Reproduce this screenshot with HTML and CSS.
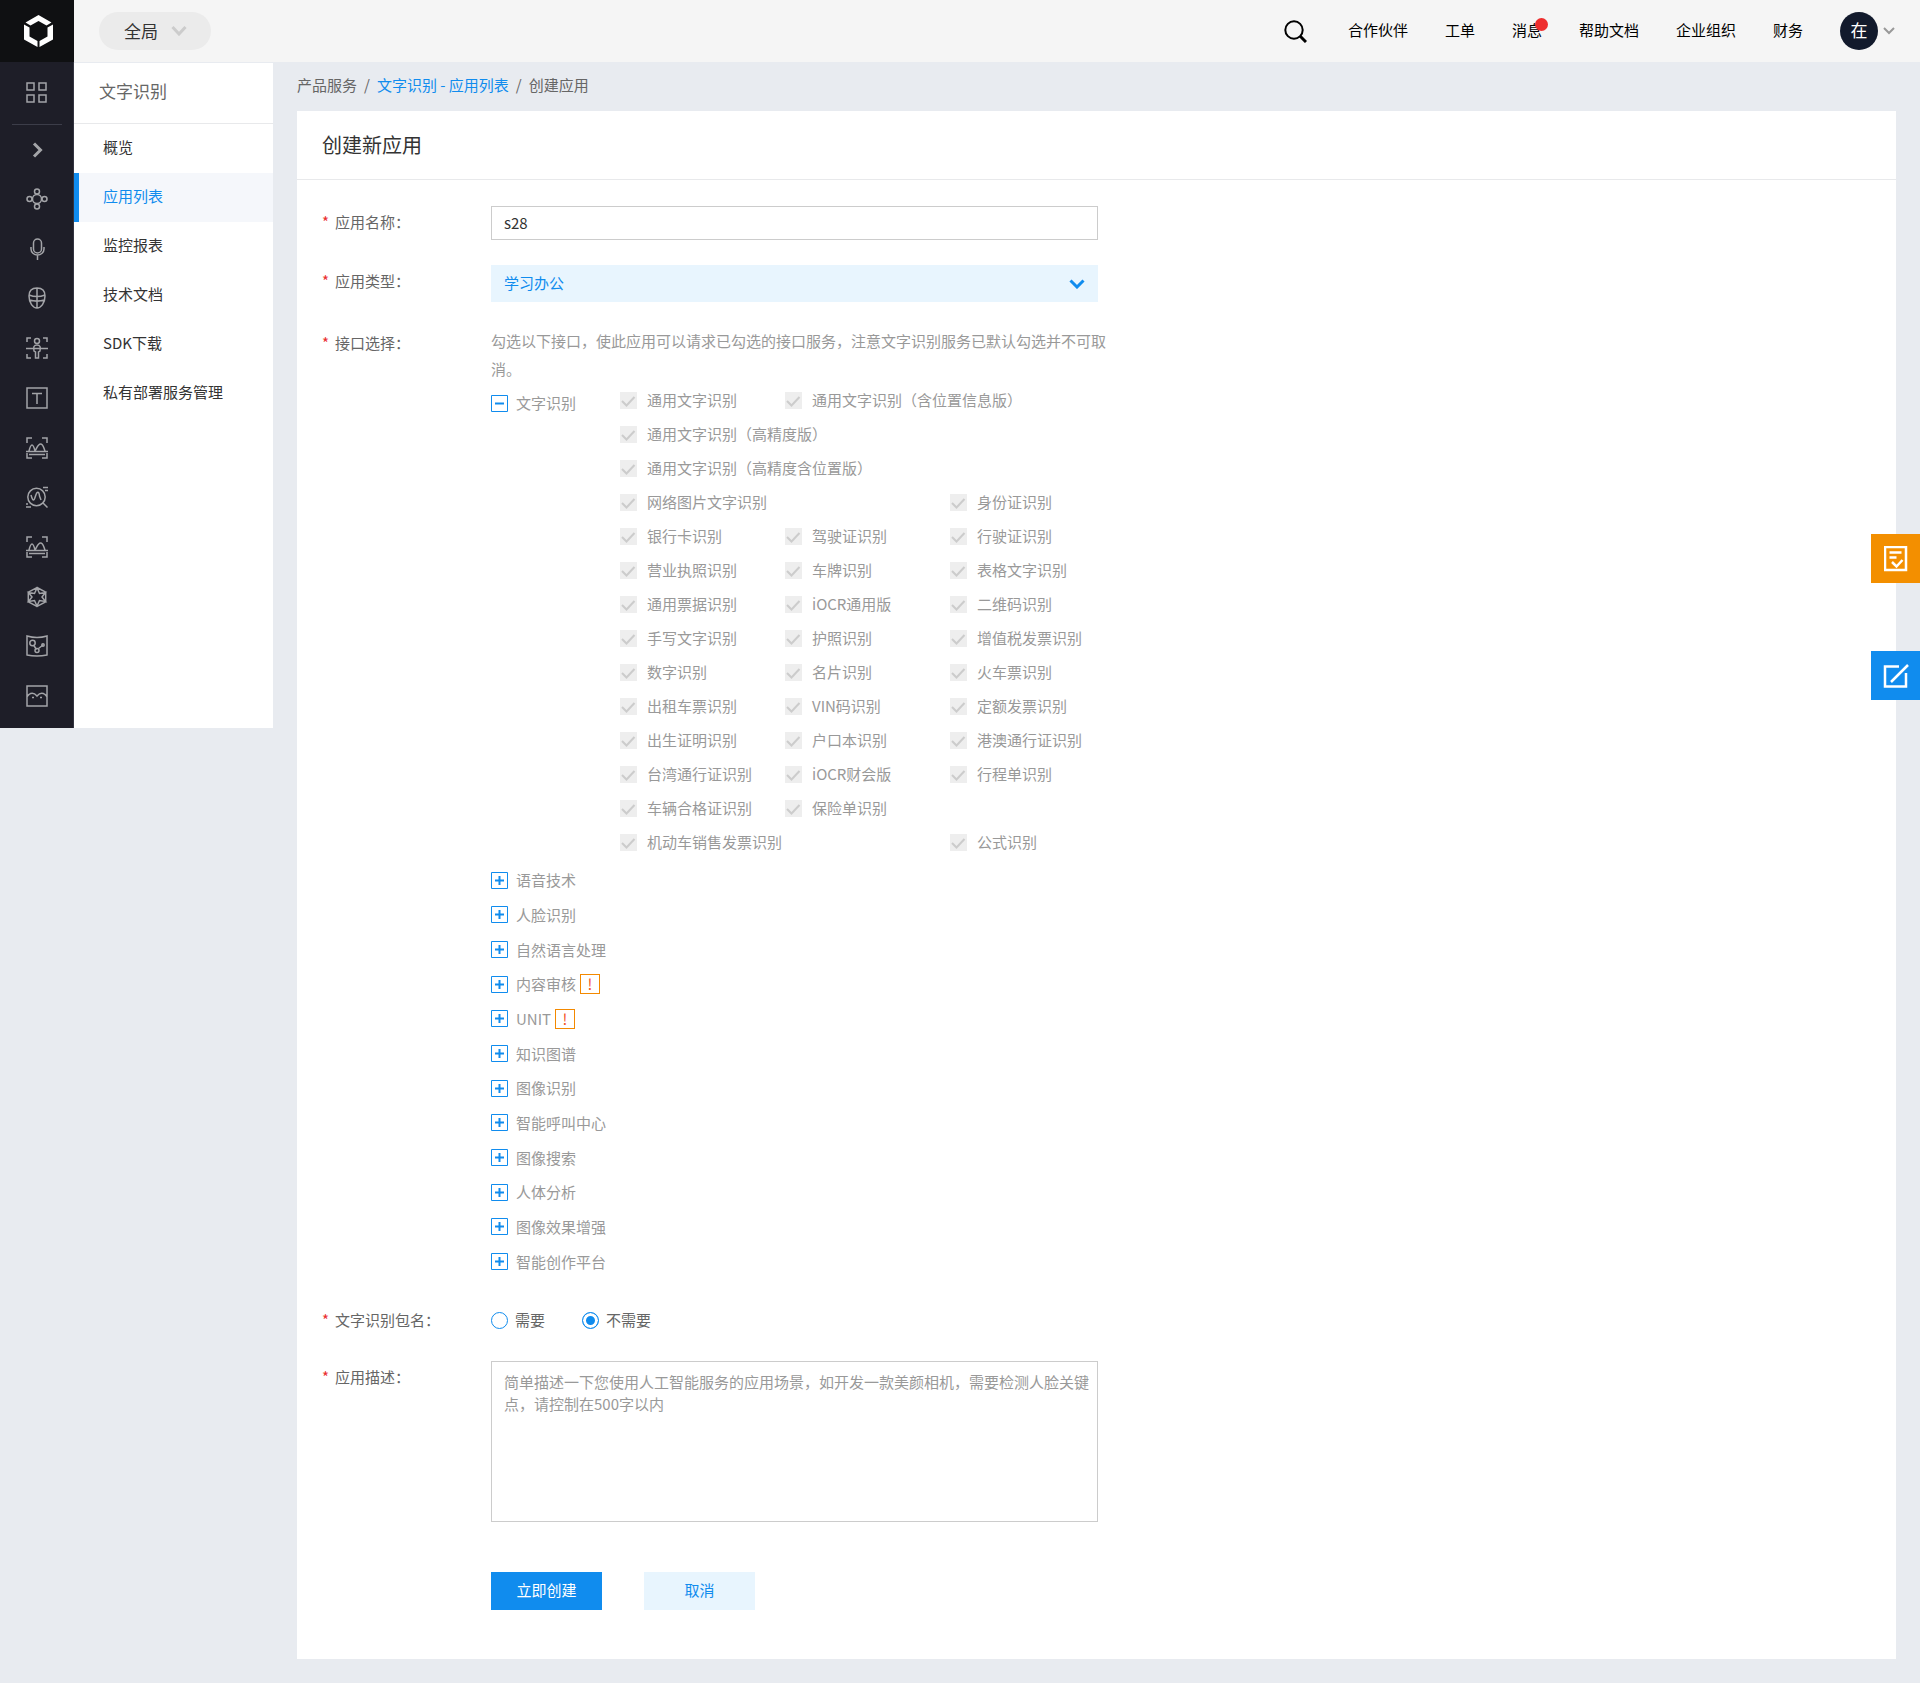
FILE: index.html
```html
<!DOCTYPE html>
<html lang="zh-CN">
<head>
<meta charset="utf-8">
<meta name="viewport" content="width=device-width, initial-scale=1">
<title>文字识别 - 创建应用</title>
<link rel="stylesheet" href="styles.css">
</head>
<body>
<svg class="sprite" aria-hidden="true">
  <symbol id="i-plus" viewBox="0 0 17 17"><path d="M.5.5h16v16H.5z" fill="#fff" stroke="#108cee"/><path d="M4 8.500h9M8.500 4v9" stroke="#108cee" stroke-width="2"/></symbol>
  <symbol id="i-scan" viewBox="0 0 22 22"><path d="M1 6V1h5M16 1h5v5M1 16v5h5M16 21h5v-5M0 14.500h22M3 14c1-4 2-6 3-6s2 2 3 6M9 14c2-3 3-7 5.500-7S17.500 10 19 14M3 17.500h16"/></symbol>
</svg>

<header class="topbar">
  <a class="logo" href="#" aria-label="控制台首页">
    <svg width="29" height="32" viewBox="0 0 29 32" fill="#fff"><path d="M14.500 0L27.500 7.500 22.500 10.500 14.500 6 6.500 10.500 1.500 7.500zM0 9.500L5.500 12.500V21.500L13.500 26V32L0 24.500zM29 9.500L23.500 12.500V21.500L15.500 26V32L29 24.500z"/></svg>
  </a>
  <button class="region" type="button">全局
    <svg width="16" height="10" viewBox="0 0 16 10" fill="none" stroke="#ccc" stroke-width="3"><path d="M1.500 1L8 8l6.500-7"/></svg>
  </button>
  <nav class="topnav" aria-label="用户导航">
    <a class="search" href="#" aria-label="搜索"><svg width="23" height="23" viewBox="0 0 23 23" fill="none" stroke="#000" stroke-width="2"><circle cx="10" cy="10" r="8.700"/><path d="M16 16l6 6" stroke-width="3"/></svg></a>
    <a href="#">合作伙伴</a>
    <a href="#">工单</a>
    <a class="has-dot" href="#">消息</a>
    <a href="#">帮助文档</a>
    <a href="#">企业组织</a>
    <a href="#">财务</a>
    <button class="account" type="button"><span class="avatar">在</span>
      <svg width="12" height="8" viewBox="0 0 12 8" fill="none" stroke="#999" stroke-width="2"><path d="M1 1l5 5 5-5"/></svg>
    </button>
  </nav>
</header>

<div class="layout">
  <nav class="rail" aria-label="产品">
    <a class="rail-home" href="#" aria-label="全部产品"><svg viewBox="0 0 22 22"><path d="M1 1h7v7H1zM13 1h7v7h-7zM1 13h7v7H1zM13 13h7v7h-7z"/></svg></a>
    <a class="rail-expand" href="#" aria-label="展开"><svg viewBox="0 0 22 22"><path d="M8 4.500l6.500 6.500L8 17.500" stroke-width="3"/></svg></a>
    <div class="rail-list">
      <a href="#" aria-label="产品一"><svg viewBox="0 0 22 22"><circle cx="11" cy="11" r="4.500"/><circle cx="11" cy="3.500" r="2.500"/><circle cx="11" cy="18.500" r="2.500"/><circle cx="3.500" cy="11" r="2.500"/><circle cx="18.500" cy="11" r="2.500"/></svg></a>
      <a href="#" aria-label="语音技术"><svg viewBox="0 0 22 22"><rect x="7.500" y="1" width="8" height="14" rx="4"/><path d="M5 9v2a6.500 6 0 0 0 13 0V9M11.500 17v5"/></svg></a>
      <a href="#" aria-label="人脸识别"><svg viewBox="0 0 22 22"><path d="M11 1c5 0 8 3 8 8 0 7-4 12-8 12S3 16 3 9c0-5 3-8 8-8zM11 1v20M3 8c5 2 11 2 16 0M3.500 13c5 1.500 10 1.500 15 0"/></svg></a>
      <a href="#" aria-label="人体分析"><svg viewBox="0 0 22 22"><path d="M1 5V1h4M17 1h4v4M1 17v4h4M17 21h4v-4M0 11.500h22M8 14c-1-4 0-6 3-6s4 2 3 6l-1.500 1v6h-3v-6z"/><circle cx="11" cy="4" r="2.500"/></svg></a>
      <a href="#" aria-label="文字识别"><svg viewBox="0 0 22 22"><path d="M1 1h20v20H1zM6 6.500h10M11 6.500V17"/></svg></a>
      <a href="#" aria-label="图像识别"><svg viewBox="0 0 22 22"><use href="#i-scan"/></svg></a>
      <a href="#" aria-label="图像搜索"><svg viewBox="0 0 22 22"><circle cx="10.500" cy="11" r="8.700"/><path d="M17 17l4.500 4.500M5 9c2 7 3 6 4.500 1s3.500-5 4 0l1.500 4M17 1.500h5M19 4.500h3M0 18h2M0 21h5"/></svg></a>
      <a href="#" aria-label="内容审核"><svg viewBox="0 0 22 22"><use href="#i-scan"/></svg></a>
      <a href="#" aria-label="知识图谱"><svg viewBox="0 0 22 22"><path d="M11 1.500l8.700 4.700v9.600L11 20.500l-8.700-4.700V6.200zM11 2l2.500 5.500 6-1L16 11l3.500 4.500-6-1L11 20l-2.500-5.500-6 1L6 11 2.500 6.500l6 1z"/></svg></a>
      <a href="#" aria-label="智能平台"><svg viewBox="0 0 22 22"><path d="M1 1q10 3 20 0v19q-10 2-20 0zM7.500 10l3 4.500M12.500 13.500L17 10"/><circle cx="6.500" cy="8" r="2.700"/><circle cx="11" cy="15.500" r="2"/><circle cx="17" cy="10" r="1.200"/></svg></a>
      <a href="#" aria-label="图像增强"><svg viewBox="0 0 22 22"><path d="M1 1h20v20H1zM1 12q1-2 2-2.500 4-3 8 1.500 4-4.500 8-1.500 1 .5 2 2.500M6 12.500h2M14 12.500h2"/></svg></a>
    </div>
  </nav>

  <nav class="menu" aria-label="文字识别">
    <h2>文字识别</h2>
    <a href="#">概览</a>
    <a class="active" href="#" aria-current="page">应用列表</a>
    <a href="#">监控报表</a>
    <a href="#">技术文档</a>
    <a href="#">SDK下载</a>
    <a href="#">私有部署服务管理</a>
  </nav>

  <main class="content">
    <div class="crumbs"><span>产品服务</span><i>/</i><a href="#">文字识别 - 应用列表</a><i>/</i><span>创建应用</span></div>
    <section class="card">
      <h1>创建新应用</h1>
      <form class="form">
        <div class="row">
          <label class="label" for="name">应用名称：</label>
          <input class="text" id="name" type="text" value="s28">
        </div>
        <div class="row">
          <label class="label" for="type">应用类型：</label>
          <select class="select" id="type"><option>学习办公</option></select>
        </div>
        <div class="row">
          <span class="label">接口选择：</span>
          <div>
            <p class="hint">勾选以下接口，使此应用可以请求已勾选的接口服务，注意文字识别服务已默认勾选并不可取消。</p>
            <div class="group">
              <button class="node node-open" type="button" aria-expanded="true"><svg width="17" height="17" viewBox="0 0 17 17"><path d="M.5.5h16v16H.5z" fill="#fff" stroke="#108cee"/><path d="M4 8.500h9" stroke="#108cee" stroke-width="2"/></svg>文字识别</button>
              <div class="checks">
                <label><input type="checkbox" checked disabled>通用文字识别</label>
                <label class="wide"><input type="checkbox" checked disabled>通用文字识别（含位置信息版）</label>
                <label class="wide"><input type="checkbox" checked disabled>通用文字识别（高精度版）</label>
                <label class="wide"><input type="checkbox" checked disabled>通用文字识别（高精度含位置版）</label>
                <label class="wide"><input type="checkbox" checked disabled>网络图片文字识别</label>
                <label><input type="checkbox" checked disabled>身份证识别</label>
                <label><input type="checkbox" checked disabled>银行卡识别</label>
                <label><input type="checkbox" checked disabled>驾驶证识别</label>
                <label><input type="checkbox" checked disabled>行驶证识别</label>
                <label><input type="checkbox" checked disabled>营业执照识别</label>
                <label><input type="checkbox" checked disabled>车牌识别</label>
                <label><input type="checkbox" checked disabled>表格文字识别</label>
                <label><input type="checkbox" checked disabled>通用票据识别</label>
                <label><input type="checkbox" checked disabled>iOCR通用版</label>
                <label><input type="checkbox" checked disabled>二维码识别</label>
                <label><input type="checkbox" checked disabled>手写文字识别</label>
                <label><input type="checkbox" checked disabled>护照识别</label>
                <label><input type="checkbox" checked disabled>增值税发票识别</label>
                <label><input type="checkbox" checked disabled>数字识别</label>
                <label><input type="checkbox" checked disabled>名片识别</label>
                <label><input type="checkbox" checked disabled>火车票识别</label>
                <label><input type="checkbox" checked disabled>出租车票识别</label>
                <label><input type="checkbox" checked disabled>VIN码识别</label>
                <label><input type="checkbox" checked disabled>定额发票识别</label>
                <label><input type="checkbox" checked disabled>出生证明识别</label>
                <label><input type="checkbox" checked disabled>户口本识别</label>
                <label><input type="checkbox" checked disabled>港澳通行证识别</label>
                <label><input type="checkbox" checked disabled>台湾通行证识别</label>
                <label><input type="checkbox" checked disabled>iOCR财会版</label>
                <label><input type="checkbox" checked disabled>行程单识别</label>
                <label><input type="checkbox" checked disabled>车辆合格证识别</label>
                <label><input type="checkbox" checked disabled>保险单识别</label>
                <label class="wide"><input type="checkbox" checked disabled>机动车销售发票识别</label>
                <label><input type="checkbox" checked disabled>公式识别</label>
              </div>
            </div>
            <div class="nodes">
              <button class="node" type="button"><svg width="17" height="17"><use href="#i-plus"/></svg>语音技术</button>
              <button class="node" type="button"><svg width="17" height="17"><use href="#i-plus"/></svg>人脸识别</button>
              <button class="node" type="button"><svg width="17" height="17"><use href="#i-plus"/></svg>自然语言处理</button>
              <button class="node" type="button"><svg width="17" height="17"><use href="#i-plus"/></svg>内容审核<span class="warn">!</span></button>
              <button class="node" type="button"><svg width="17" height="17"><use href="#i-plus"/></svg>UNIT<span class="warn">!</span></button>
              <button class="node" type="button"><svg width="17" height="17"><use href="#i-plus"/></svg>知识图谱</button>
              <button class="node" type="button"><svg width="17" height="17"><use href="#i-plus"/></svg>图像识别</button>
              <button class="node" type="button"><svg width="17" height="17"><use href="#i-plus"/></svg>智能呼叫中心</button>
              <button class="node" type="button"><svg width="17" height="17"><use href="#i-plus"/></svg>图像搜索</button>
              <button class="node" type="button"><svg width="17" height="17"><use href="#i-plus"/></svg>人体分析</button>
              <button class="node" type="button"><svg width="17" height="17"><use href="#i-plus"/></svg>图像效果增强</button>
              <button class="node" type="button"><svg width="17" height="17"><use href="#i-plus"/></svg>智能创作平台</button>
            </div>
          </div>
        </div>
        <div class="row">
          <span class="label">文字识别包名：</span>
          <div class="radios">
            <label><input type="radio" name="pkg">需要</label>
            <label><input type="radio" name="pkg" checked>不需要</label>
          </div>
        </div>
        <div class="row">
          <label class="label" for="desc">应用描述：</label>
          <textarea class="area" id="desc" placeholder="简单描述一下您使用人工智能服务的应用场景，如开发一款美颜相机，需要检测人脸关键点，请控制在500字以内"></textarea>
        </div>
        <div class="actions">
          <button class="btn primary" type="submit">立即创建</button>
          <button class="btn" type="button">取消</button>
        </div>
      </form>
    </section>
  </main>
</div>

<div class="floats">
  <a class="survey" href="#" aria-label="问卷"><svg width="24" height="26" viewBox="0 0 24 26" fill="none" stroke="#fff" stroke-width="2"><path d="M1 1h21v23H1zM5.500 6.500h12M5.500 11.500h7M8 16l4.500 4.500L18.500 14" stroke-width="2.500"/></svg></a>
  <a class="feedback" href="#" aria-label="反馈"><svg width="26" height="24" viewBox="0 0 26 24" fill="none" stroke="#fff" stroke-width="2.500"><path d="M16 2.500H2v20h21V9M8 18L25 1"/></svg></a>
</div>
</body>
</html>
```
FILE: styles.css
```css
* { box-sizing: border-box; }

body {
  margin: 0;
  background: #e8ebf0;
  color: #333;
  font: 400 15px/24px "Noto Sans CJK SC", "Noto Sans", sans-serif;
}

a { color: inherit; text-decoration: none; }
button, input, select, textarea { font: inherit; margin: 0; }
button { border: 0; padding: 0; background: none; cursor: pointer; }
h1, h2, p { margin: 0; font-weight: inherit; }
svg { display: block; flex: none; }
.sprite { position: absolute; width: 0; height: 0; }

/* top bar */
.topbar {
  display: flex;
  align-items: center;
  height: 62px;
  padding-right: 25px;
  background: #f5f5f5;
}
.logo {
  display: flex;
  align-items: center;
  justify-content: center;
  width: 74px;
  height: 62px;
  padding-left: 2px;
  background: #0f1012;
}
.region {
  display: flex;
  align-items: center;
  gap: 13px;
  height: 38px;
  margin-left: 25px;
  padding: 0 24px 0 25px;
  border-radius: 19px;
  background: #ebebeb;
  color: #333;
  font-size: 17px;
}
.topnav {
  display: flex;
  align-items: center;
  gap: 37px;
  margin-left: auto;
  color: #000;
}
.topnav > a { padding-bottom: 3px; }
.topnav > .search { margin-right: 4px; padding: 0; }
.has-dot { position: relative; }
.has-dot::after {
  content: "";
  position: absolute;
  top: 0;
  right: -6px;
  width: 13px;
  height: 13px;
  border-radius: 50%;
  background: #ee2e2e;
}
.account { display: flex; align-items: center; gap: 5px; }
.avatar {
  width: 38px;
  height: 38px;
  border-radius: 50%;
  background: #121a2c;
  color: #fff;
  font-size: 17px;
  line-height: 36px;
}

/* columns */
.layout { display: flex; align-items: flex-start; }
.rail, .menu { flex: none; min-height: 666px; }
.rail {
  display: flex;
  flex-direction: column;
  width: 74px;
  padding: 0 0 7px 1px;
  border-right: 1px solid #333440;
  background: #1e1e28;
}
.rail a { display: flex; align-items: center; justify-content: center; }
.rail svg { width: 22px; height: 22px; fill: none; stroke: #a3a4a8; stroke-width: 1.5; }
.rail-home { height: 63px; margin: 0 11px; border-bottom: 1px solid #3c3d49; }
.rail-expand { height: 49px; }
.rail-list { display: flex; flex: 1; flex-direction: column; }
.rail-list a { flex: 1; }

.menu {
  width: 199px;
  border-top: 1px solid #e8ebf0;
  background: #fff;
}
.menu h2 {
  height: 61px;
  padding-left: 25px;
  border-bottom: 1px solid #e8e9eb;
  color: #666;
  font-size: 17px;
  line-height: 56px;
}
.menu a {
  display: block;
  padding: 0 0 4px 24px;
  border-left: 5px solid transparent;
  line-height: 45px;
}
.menu .active {
  border-left-color: #108cee;
  background: #f5f7fb;
  color: #108cee;
}

.content { flex: 1; min-width: 0; padding: 0 24px 24px; }
.crumbs { display: flex; gap: 7px; height: 49px; color: #666; line-height: 46px; }
.crumbs a { color: #108cee; }
.crumbs i { font-style: normal; }

.card { background: #fff; }
.card h1 {
  padding: 0 25px;
  border-bottom: 1px solid #e8e9eb;
  font-size: 20px;
  line-height: 68px;
}

/* form */
.form {
  display: flex;
  flex-direction: column;
  gap: 25px;
  padding: 26px 25px 49px;
}
.row { display: grid; grid-template-columns: 169px 1fr; align-items: start; }
.label { color: #666; line-height: 31px; }
.label::before { content: "*"; margin-right: 6px; color: #ea2e2e; }
.text, .select, .area {
  width: 100%;
  max-width: 607px;
  padding: 0 12px 2px;
  border: 1px solid #ccc;
  border-radius: 0;
  background: #fff;
  color: #333;
}
.text { height: 34px; }
.select {
  height: 37px;
  appearance: none;
  border-color: #e8f5fe;
  background: #e8f5fe url("data:image/svg+xml,%3Csvg xmlns='http://www.w3.org/2000/svg' width='16' height='10' fill='none' stroke='%23108cee' stroke-width='3'%3E%3Cpath d='M1.500 1.500L8 8l6.500-6.500'/%3E%3C/svg%3E") no-repeat right 12px center;
  color: #108cee;
}
.area {
  display: block;
  height: 161px;
  padding: 9px 6px 9px 12px;
  line-height: 22px;
  resize: none;
}
.area::placeholder { color: #999; }

.hint { max-width: 620px; color: #999; line-height: 28px; }
.group { display: flex; align-items: flex-start; margin-bottom: 4px; }
.node { display: flex; align-items: center; color: #999; line-height: 22px; }
.node svg { margin-right: 8px; }
.node-open { width: 129px; height: 40px; }
.nodes {
  display: grid;
  grid-auto-rows: 1fr;
  justify-items: start;
  min-height: 416px;
}
.warn {
  width: 20px;
  height: 20px;
  margin-left: 4px;
  border: 1px solid #f38900;
  color: #f4511e;
  line-height: 17px;
}

.checks {
  display: grid;
  grid-template-columns: repeat(3, 165px);
  grid-auto-rows: 34px;
}
.checks label {
  display: flex;
  align-items: center;
  gap: 10px;
  color: #999;
  white-space: nowrap;
}
.checks .wide { grid-column: span 2; }
.checks input {
  flex: none;
  width: 17px;
  height: 17px;
  appearance: none;
  background: #eee url("data:image/svg+xml,%3Csvg xmlns='http://www.w3.org/2000/svg' width='17' height='17' fill='none' stroke='%23ccc' stroke-width='2'%3E%3Cpath d='M2 9l4.500 4.500L14.500 5'/%3E%3C/svg%3E") no-repeat;
}

.radios { display: flex; gap: 37px; color: #666; }
.radios label { display: flex; align-items: center; gap: 7px; height: 32px; }
.radios input {
  width: 17px;
  height: 17px;
  appearance: none;
  border: 1px solid #108cee;
  border-radius: 50%;
  background: #fff;
}
.radios input:checked { background: #108cee; box-shadow: inset 0 0 0 3px #fff; }

.actions { display: flex; gap: 42px; margin-top: 25px; padding-left: 169px; }
.btn { width: 111px; height: 38px; padding-bottom: 2px; background: #e8f5fe; color: #108cee; }
.primary { background: #108cee; color: #fff; }

/* floating shortcuts */
.floats {
  position: fixed;
  top: 534px;
  right: 0;
  display: grid;
  gap: 68px;
}
.floats a { display: grid; place-items: center; width: 49px; height: 49px; }
.survey { background: #f38f00; }
.feedback { background: #108cee; }
```
